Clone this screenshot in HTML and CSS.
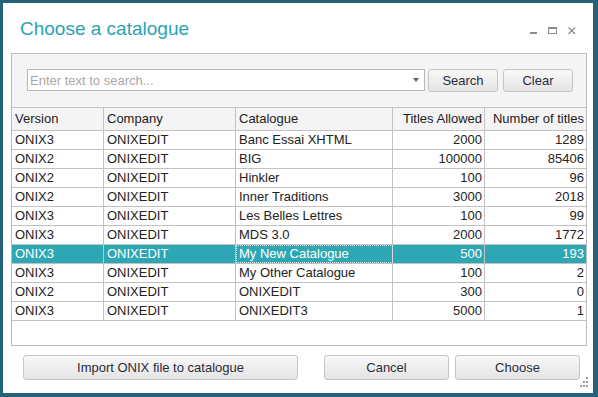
FILE: index.html
```html
<!DOCTYPE html>
<html lang="en">
<head>
    <meta charset="UTF-8">
    <meta name="viewport" content="width=device-width, initial-scale=1.0">
    <title>Choose a catalogue</title>
    <link rel="stylesheet" href="styles.css">
</head>
<body>
    <div class="window">
        <div class="titlebar">
            <h1 class="title">Choose a catalogue</h1>
            <svg class="controls" width="46" height="8" viewBox="0 0 46 8">
                <rect x="0" y="5" width="7" height="2" fill="#8c8c8c"/>
                <rect x="18.5" y="0.5" width="8" height="6" fill="none" stroke="#8c8c8c"/>
                <rect x="18" y="0" width="9" height="2" fill="#8c8c8c"/>
                <path d="M38.5 0.5 L45 7 M45 0.5 L38.5 7" stroke="#8c8c8c" stroke-width="1.3"/>
            </svg>
        </div>

        <div class="panel">
            <div class="toolbar">
                <div class="search-box">
                    <input type="text" class="search-input" placeholder="Enter text to search...">
                    <span class="arrow"></span>
                </div>
                <button class="btn btn-search">Search</button>
                <button class="btn btn-clear">Clear</button>
            </div>

            <div class="grid">
                <div class="row head">
                    <div class="cell">Version</div>
                    <div class="cell">Company</div>
                    <div class="cell">Catalogue</div>
                    <div class="cell num">Titles Allowed</div>
                    <div class="cell num">Number of titles</div>
                </div>
                <div class="row">
                    <div class="cell">ONIX3</div><div class="cell">ONIXEDIT</div><div class="cell">Banc Essai XHTML</div>
                    <div class="cell num">2000</div><div class="cell num">1289</div>
                </div>
                <div class="row">
                    <div class="cell">ONIX2</div><div class="cell">ONIXEDIT</div><div class="cell">BIG</div>
                    <div class="cell num">100000</div><div class="cell num">85406</div>
                </div>
                <div class="row">
                    <div class="cell">ONIX2</div><div class="cell">ONIXEDIT</div><div class="cell">Hinkler</div>
                    <div class="cell num">100</div><div class="cell num">96</div>
                </div>
                <div class="row">
                    <div class="cell">ONIX2</div><div class="cell">ONIXEDIT</div><div class="cell">Inner Traditions</div>
                    <div class="cell num">3000</div><div class="cell num">2018</div>
                </div>
                <div class="row">
                    <div class="cell">ONIX3</div><div class="cell">ONIXEDIT</div><div class="cell">Les Belles Lettres</div>
                    <div class="cell num">100</div><div class="cell num">99</div>
                </div>
                <div class="row">
                    <div class="cell">ONIX3</div><div class="cell">ONIXEDIT</div><div class="cell">MDS 3.0</div>
                    <div class="cell num">2000</div><div class="cell num">1772</div>
                </div>
                <div class="row selected">
                    <div class="cell">ONIX3</div><div class="cell">ONIXEDIT</div><div class="cell focus">My New Catalogue</div>
                    <div class="cell num">500</div><div class="cell num">193</div>
                </div>
                <div class="row">
                    <div class="cell">ONIX3</div><div class="cell">ONIXEDIT</div><div class="cell">My Other Catalogue</div>
                    <div class="cell num">100</div><div class="cell num">2</div>
                </div>
                <div class="row">
                    <div class="cell">ONIX2</div><div class="cell">ONIXEDIT</div><div class="cell">ONIXEDIT</div>
                    <div class="cell num">300</div><div class="cell num">0</div>
                </div>
                <div class="row">
                    <div class="cell">ONIX3</div><div class="cell">ONIXEDIT</div><div class="cell">ONIXEDIT3</div>
                    <div class="cell num">5000</div><div class="cell num">1</div>
                </div>
            </div>
        </div>

        <div class="footer">
            <button class="btn btn-import">Import ONIX file to catalogue</button>
            <button class="btn btn-cancel">Cancel</button>
            <button class="btn btn-choose">Choose</button>
        </div>

        <svg class="grip" width="12" height="12" viewBox="0 0 12 12">
            <rect x="9" y="1" width="2" height="2" fill="#9a9a9a"/>
            <rect x="6" y="5" width="2" height="2" fill="#9a9a9a"/>
            <rect x="9" y="5" width="2" height="2" fill="#9a9a9a"/>
            <rect x="3" y="9" width="2" height="2" fill="#9a9a9a"/>
            <rect x="6" y="9" width="2" height="2" fill="#9a9a9a"/>
            <rect x="9" y="9" width="2" height="2" fill="#9a9a9a"/>
        </svg>
    </div>
</body>
</html>
```

FILE: styles.css
```css
body {
    margin: 0;
    font-family: 'Liberation Sans', Arial, sans-serif;
    font-size: 13px;
    color: #222;
}
.window {
    position: relative;
    width: 598px;
    height: 397px;
    box-sizing: border-box;
    border-style: solid;
    border-color: #26617a;
    border-width: 3px 5px 4px 3px;
    background: white;
    display: flex;
    flex-direction: column;
}
.titlebar {
    height: 50px;
    display: flex;
    align-items: flex-start;
}
.title {
    margin: 0;
    padding: 15px 0 0 17px;
    font-size: 19px;
    font-weight: normal;
    line-height: 22px;
    color: #2ba3b2;
}
.controls {
    margin: 24px 17px 0 auto;
}
.panel {
    margin: 0 6px 0 8px;
    height: 293px;
    box-sizing: border-box;
    border: 1px solid #bcbcbc;
    background: #f4f4f4;
    display: flex;
    flex-direction: column;
}
.toolbar {
    height: 53px;
    box-sizing: border-box;
    padding: 15px 0 0 15px;
    display: flex;
    align-items: flex-start;
}
.search-box {
    position: relative;
    width: 398px;
    height: 22px;
    margin-right: 3px;
}
.search-input {
    width: 100%;
    height: 100%;
    box-sizing: border-box;
    border: 1px solid #b8b8b8;
    padding: 0 20px 0 2px;
    font-family: inherit;
    font-size: 13px;
    color: #222;
    background: white;
    outline: none;
}
.search-input::placeholder {
    color: #a8a8a8;
}
.arrow {
    position: absolute;
    right: 6px;
    top: 9px;
    border-left: 3px solid transparent;
    border-right: 3px solid transparent;
    border-top: 4px solid #606060;
}
.btn {
    box-sizing: border-box;
    border: 1px solid #c6c6c6;
    border-radius: 3px;
    background: linear-gradient(#f8f8f8, #e4e4e4);
    font-family: inherit;
    font-size: 13px;
    color: #2b2b3b;
    padding: 0;
    cursor: pointer;
}
.btn:hover {
    background: linear-gradient(#fdfdfd, #ebebeb);
}
.btn-search {
    width: 70px;
    height: 23px;
    margin-right: 5px;
}
.btn-clear {
    width: 70px;
    height: 23px;
}
.grid {
    flex: 1;
    background: white;
}
.row {
    display: grid;
    grid-template-columns: 92px 132px 157px 92px 1fr;
    height: 19px;
    box-sizing: border-box;
    border-bottom: 1px solid #c2c2c2;
}
.row.head {
    height: 24px;
    border-top: 1px solid #c2c2c2;
    background: #f4f4f4;
}
.cell {
    border-right: 1px solid #c2c2c2;
    padding: 0 2px 0 3px;
    line-height: 18px;
    white-space: nowrap;
    overflow: hidden;
}
.head .cell {
    line-height: 22px;
}
.cell:last-child {
    border-right: none;
}
.num {
    text-align: right;
}
.row.selected {
    background: #2ea7b4;
    color: white;
}
.cell.focus {
    outline: 1px dotted #dff1f3;
    outline-offset: -1px;
}
.footer {
    display: flex;
    padding: 9px 13px 0 20px;
}
.footer .btn {
    height: 25px;
}
.btn-import {
    width: 275px;
}
.btn-cancel {
    width: 125px;
    margin-left: auto;
    margin-right: 6px;
}
.btn-choose {
    width: 125px;
}
.grip {
    position: absolute;
    right: 4px;
    bottom: 5px;
}
```
